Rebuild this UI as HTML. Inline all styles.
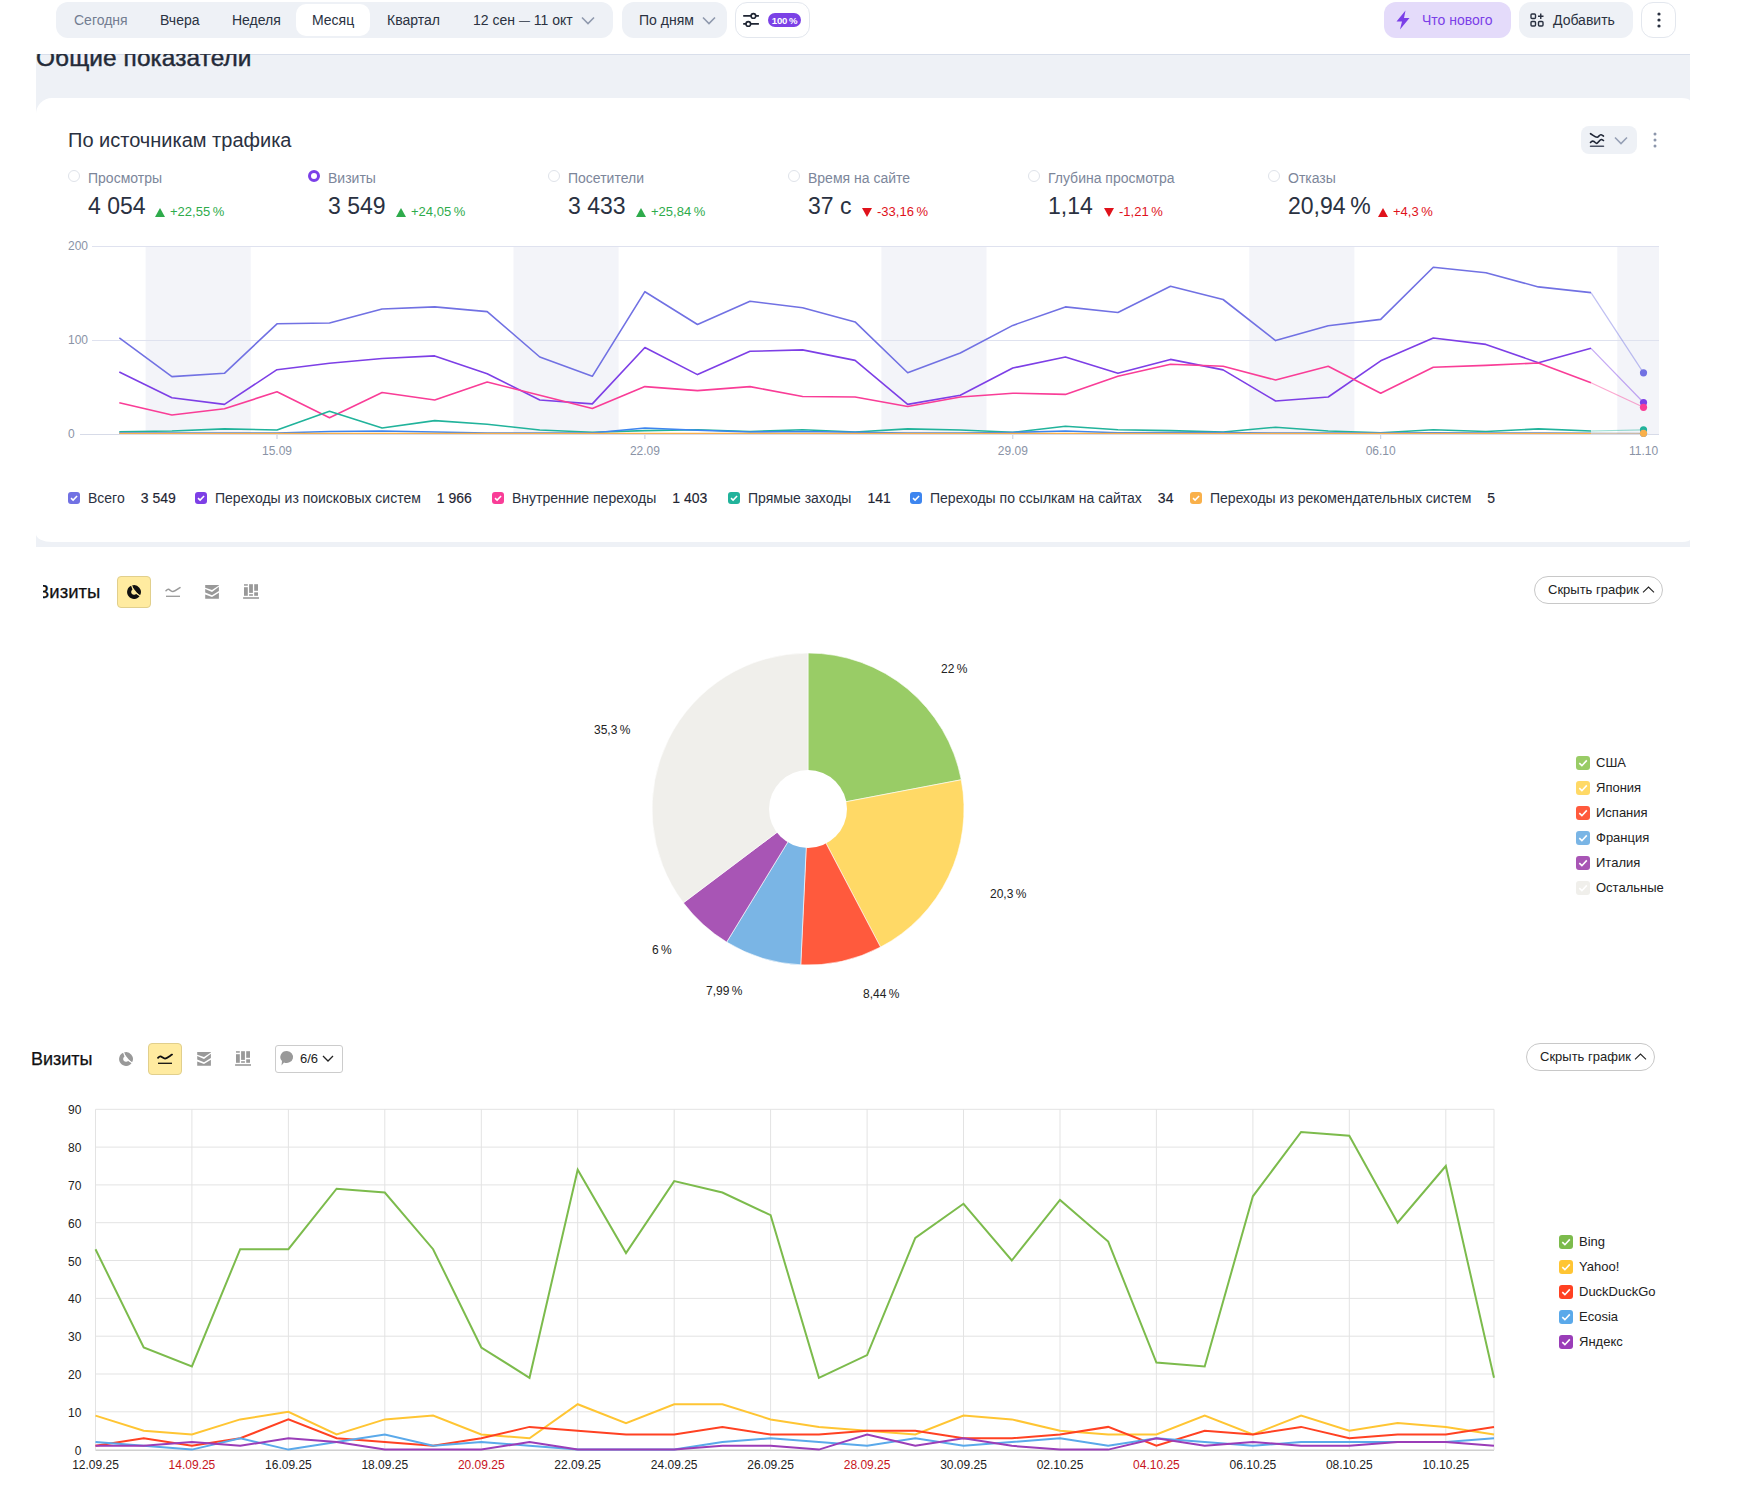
<!DOCTYPE html>
<html><head><meta charset="utf-8">
<style>
*{box-sizing:border-box;margin:0;padding:0}
html,body{width:1739px;height:1488px;overflow:hidden;background:#fff;font-family:"Liberation Sans", sans-serif;}
.abs{position:absolute}
svg{display:block}
.hdr-t{position:absolute;font-size:14px;line-height:16px;color:#2a3141;white-space:nowrap}
.ax1{position:absolute;font-size:12px;line-height:16px;color:#8a93a6;white-space:nowrap}
.ax3{position:absolute;font-size:12px;line-height:16px;color:#222;white-space:nowrap}
.pl{position:absolute;font-size:12px;line-height:16px;color:#222;white-space:nowrap}
.mlab{position:absolute;font-size:14px;line-height:16px;color:#7c869a;white-space:nowrap}
.mval{position:absolute;font-size:23px;line-height:26px;color:#2a3141;white-space:nowrap}
.mdel{position:absolute;font-size:13px;line-height:16px;white-space:nowrap}
.radio{position:absolute;width:12px;height:12px;border-radius:50%;border:1px solid #dfe3ea}
.leg1{position:absolute;font-size:14px;line-height:16px;color:#2a3141;white-space:nowrap}
.leg1 b{font-weight:normal}
.lg{position:absolute;font-size:13px;line-height:16px;color:#222;white-space:nowrap}
.btnh{position:absolute;border:1px solid #c8c8c8;border-radius:14px;background:#fff;font-size:13px;color:#222;line-height:26px;white-space:nowrap}
</style></head><body>

<div class="abs" style="left:36px;top:54px;width:1654px;height:495px;background:#eef1f6;border-top:1px solid #d9dfeb"></div>
<div class="abs" style="left:36px;top:44px;font-size:24.4px;line-height:28px;color:#232a38;white-space:nowrap;-webkit-text-stroke:0.45px #232a38;letter-spacing:0.1px">Общие показатели</div>
<div class="abs" style="left:36px;top:98px;width:1654px;height:444px;background:#fff;border-radius:16px 9px 8px 16px / 16px 2.8px 2.5px 8px"></div>
<div class="abs" style="left:0;top:0;width:1739px;height:54px;background:#fff"></div>
<div class="abs" style="left:56px;top:2px;width:557px;height:36px;background:#eef1f6;border-radius:12px"></div>
<div class="abs" style="left:296px;top:4px;width:74px;height:32px;background:#fff;border-radius:10px"></div>
<div class="hdr-t" style="left:74px;top:12px;color:#737d91">Сегодня</div>
<div class="hdr-t" style="left:160px;top:12px;color:#2a3141">Вчера</div>
<div class="hdr-t" style="left:232px;top:12px;color:#2a3141">Неделя</div>
<div class="hdr-t" style="left:312px;top:12px;color:#2a3141">Месяц</div>
<div class="hdr-t" style="left:387px;top:12px;color:#2a3141">Квартал</div>
<div class="hdr-t" style="left:473px;top:12px;color:#2a3141">12 сен <span style="font-size:11px;position:relative;top:-1px">—</span> 11 окт</div>
<div class="abs" style="left:581px;top:16px"><svg width="14" height="9" viewBox="0 0 14 9"><path d="M1 1.5 L7 7.5 L13 1.5" fill="none" stroke="#8f99ad" stroke-width="1.6"/></svg></div>
<div class="abs" style="left:622px;top:2px;width:105px;height:36px;background:#eef1f6;border-radius:12px"></div>
<div class="hdr-t" style="left:639px;top:12px">По дням</div>
<div class="abs" style="left:702px;top:16px"><svg width="14" height="9" viewBox="0 0 14 9"><path d="M1 1.5 L7 7.5 L13 1.5" fill="none" stroke="#8f99ad" stroke-width="1.6"/></svg></div>
<div class="abs" style="left:735px;top:2px;width:75px;height:36px;background:#fff;border:1px solid #e3e7ee;border-radius:12px"></div>
<svg class="abs" style="left:743px;top:12px" width="16" height="16" viewBox="0 0 16 16"><path d="M0.2 3.9 H15.9 M0.2 11.9 H15.9" stroke="#1f2533" stroke-width="1.8"/><circle cx="10.4" cy="3.9" r="2.3" fill="#fff" stroke="#1f2533" stroke-width="1.6"/><circle cx="5.3" cy="11.9" r="2.3" fill="#fff" stroke="#1f2533" stroke-width="1.6"/></svg>
<div class="abs" style="left:768px;top:13px;width:33px;height:14px;background:#7b41e6;border-radius:7px;color:#fff;font-size:9.6px;font-weight:bold;line-height:15px;text-align:center;letter-spacing:-0.2px">100&thinsp;%</div>
<div class="abs" style="left:1384px;top:2px;width:127px;height:36px;background:#e4dbfa;border-radius:12px"></div>
<svg class="abs" style="left:1395px;top:10px" width="16" height="20" viewBox="0 0 16 20"><path d="M10.5 0.5 L1.5 11.5 H7 L5 19.5 L14.5 8 H9 Z" fill="#7b3fe8"/></svg>
<div class="hdr-t" style="left:1422px;top:12px;color:#7b3fe8">Что нового</div>
<div class="abs" style="left:1519px;top:2px;width:114px;height:36px;background:#eef1f6;border-radius:12px"></div>
<svg class="abs" style="left:1530px;top:13px" width="14" height="14" viewBox="0 0 14 14"><rect x="1" y="1" width="4.5" height="4.5" rx="1" fill="none" stroke="#2a3141" stroke-width="1.4"/><rect x="1" y="8.5" width="4.5" height="4.5" rx="1" fill="none" stroke="#2a3141" stroke-width="1.4"/><rect x="8.5" y="8.5" width="4.5" height="4.5" rx="1" fill="none" stroke="#2a3141" stroke-width="1.4"/><path d="M10.75 0.5 V6 M8 3.25 H13.5" stroke="#2a3141" stroke-width="1.4"/></svg>
<div class="hdr-t" style="left:1553px;top:12px">Добавить</div>
<div class="abs" style="left:1641px;top:2px;width:35px;height:36px;background:#fff;border:1px solid #e3e7ee;border-radius:12px"></div>
<svg class="abs" style="left:1656px;top:12px" width="6" height="16" viewBox="0 0 6 16"><circle cx="3" cy="2" r="1.6" fill="#2a3141"/><circle cx="3" cy="8" r="1.6" fill="#2a3141"/><circle cx="3" cy="14" r="1.6" fill="#2a3141"/></svg>
<div class="abs" style="left:68px;top:128px;font-size:20px;line-height:24px;color:#2a3141;white-space:nowrap">По источникам трафика</div>
<div class="abs" style="left:1581px;top:126px;width:56px;height:28px;background:#eef1f6;border-radius:8px"></div>
<svg class="abs" style="left:1589px;top:132px" width="16" height="16" viewBox="0 0 16 16"><path d="M1.5 1.7 C4 3.2 6.5 5.5 8.2 5.3 C9.5 5.1 10.5 2.5 12 2.8 C13 3 13.8 3.6 14.5 4.1 M1.5 10.5 C2.5 9.2 3.8 8.8 5 9.5 C6.2 10.2 7 11.8 8 11.3 C9.5 10.5 11 7.2 12.5 7.5 C13.3 7.7 14 8.3 14.5 8.5" fill="none" stroke="#1f2636" stroke-width="1.6" stroke-linecap="round"/><path d="M1.5 14.3 H14.5" stroke="#4a5163" stroke-width="1.5" stroke-linecap="round"/></svg>
<svg class="abs" style="left:1614px;top:136px" width="14" height="9" viewBox="0 0 14 9"><path d="M1 1.5 L7 7.5 L13 1.5" fill="none" stroke="#96a0b5" stroke-width="1.6"/></svg>
<svg class="abs" style="left:1652px;top:131px" width="6" height="18" viewBox="0 0 6 18"><circle cx="3" cy="3" r="1.5" fill="#8c96ab"/><circle cx="3" cy="9" r="1.5" fill="#8c96ab"/><circle cx="3" cy="15" r="1.5" fill="#8c96ab"/></svg>
<div class="radio" style="left:68px;top:170px"></div>
<div class="mlab" style="left:88px;top:170px">Просмотры</div>
<div class="mval" style="left:88px;top:193px">4 054</div>
<div class="mdel" style="left:155px;top:203.5px;color:#2eab4b"><svg width="10" height="9" viewBox="0 0 10 9" style="position:absolute;left:0;top:4px"><path d="M0 9 L5 0 L10 9 Z" fill="#2eab4b"/></svg><span style="position:absolute;left:15px;top:0">+22,55&thinsp;%</span></div>
<div class="radio" style="left:308px;top:170px;border:3.5px solid #7b3fe8"></div>
<div class="mlab" style="left:328px;top:170px">Визиты</div>
<div class="mval" style="left:328px;top:193px">3 549</div>
<div class="mdel" style="left:396px;top:203.5px;color:#2eab4b"><svg width="10" height="9" viewBox="0 0 10 9" style="position:absolute;left:0;top:4px"><path d="M0 9 L5 0 L10 9 Z" fill="#2eab4b"/></svg><span style="position:absolute;left:15px;top:0">+24,05&thinsp;%</span></div>
<div class="radio" style="left:548px;top:170px"></div>
<div class="mlab" style="left:568px;top:170px">Посетители</div>
<div class="mval" style="left:568px;top:193px">3 433</div>
<div class="mdel" style="left:636px;top:203.5px;color:#2eab4b"><svg width="10" height="9" viewBox="0 0 10 9" style="position:absolute;left:0;top:4px"><path d="M0 9 L5 0 L10 9 Z" fill="#2eab4b"/></svg><span style="position:absolute;left:15px;top:0">+25,84&thinsp;%</span></div>
<div class="radio" style="left:788px;top:170px"></div>
<div class="mlab" style="left:808px;top:170px">Время на сайте</div>
<div class="mval" style="left:808px;top:193px">37 с</div>
<div class="mdel" style="left:862px;top:203.5px;color:#e0121b"><svg width="10" height="9" viewBox="0 0 10 9" style="position:absolute;left:0;top:4px"><path d="M0 0 L10 0 L5 9 Z" fill="#e0121b"/></svg><span style="position:absolute;left:15px;top:0">-33,16&thinsp;%</span></div>
<div class="radio" style="left:1028px;top:170px"></div>
<div class="mlab" style="left:1048px;top:170px">Глубина просмотра</div>
<div class="mval" style="left:1048px;top:193px">1,14</div>
<div class="mdel" style="left:1104px;top:203.5px;color:#e0121b"><svg width="10" height="9" viewBox="0 0 10 9" style="position:absolute;left:0;top:4px"><path d="M0 0 L10 0 L5 9 Z" fill="#e0121b"/></svg><span style="position:absolute;left:15px;top:0">-1,21&thinsp;%</span></div>
<div class="radio" style="left:1268px;top:170px"></div>
<div class="mlab" style="left:1288px;top:170px">Отказы</div>
<div class="mval" style="left:1288px;top:193px">20,94&thinsp;%</div>
<div class="mdel" style="left:1378px;top:203.5px;color:#e0121b"><svg width="10" height="9" viewBox="0 0 10 9" style="position:absolute;left:0;top:4px"><path d="M0 9 L5 0 L10 9 Z" fill="#e0121b"/></svg><span style="position:absolute;left:15px;top:0">+4,3&thinsp;%</span></div>
<svg width="1739" height="480" style="position:absolute;left:0;top:0">
<rect x="145.6" y="246" width="105.1" height="188" fill="#f3f4f9"/>
<rect x="513.5" y="246" width="105.1" height="188" fill="#f3f4f9"/>
<rect x="881.4" y="246" width="105.1" height="188" fill="#f3f4f9"/>
<rect x="1249.3" y="246" width="105.1" height="188" fill="#f3f4f9"/>
<rect x="1617.3" y="246" width="41.7" height="188" fill="#f3f4f9"/>
<line x1="92" y1="246.5" x2="1659" y2="246.5" stroke="#dfe2ef" stroke-width="1"/>
<line x1="92" y1="340.5" x2="1659" y2="340.5" stroke="#dfe2ef" stroke-width="1"/>
<line x1="80" y1="434.5" x2="1659" y2="434.5" stroke="#d7dbe8" stroke-width="1"/>
<line x1="277.0" y1="435" x2="277.0" y2="439" stroke="#c5cbdb" stroke-width="1"/>
<line x1="644.9" y1="435" x2="644.9" y2="439" stroke="#c5cbdb" stroke-width="1"/>
<line x1="1012.8" y1="435" x2="1012.8" y2="439" stroke="#c5cbdb" stroke-width="1"/>
<line x1="1380.7" y1="435" x2="1380.7" y2="439" stroke="#c5cbdb" stroke-width="1"/>
<polyline points="119.3,337.8 171.9,376.6 224.4,373.3 277.0,323.8 329.5,323.0 382.1,309.0 434.7,306.9 487.2,311.6 539.8,357.0 592.3,376.3 644.9,291.7 697.5,324.5 750.0,301.2 802.6,307.8 855.1,321.9 907.7,372.8 960.3,353.0 1012.8,325.4 1065.4,306.9 1117.9,312.5 1170.5,286.2 1223.1,299.5 1275.6,340.6 1328.2,325.7 1380.7,319.4 1433.3,267.3 1485.9,272.8 1538.4,286.9 1591.0,292.6" fill="none" stroke="#7171e3" stroke-width="1.6" stroke-linejoin="round"/><polyline points="1591.0,292.6 1643.5,372.8" fill="none" stroke="#7171e3" stroke-opacity="0.45" stroke-width="1.2"/><circle cx="1643.5" cy="372.8" r="3.6" fill="#7171e3"/>
<polyline points="119.3,372.0 171.9,397.8 224.4,404.4 277.0,369.7 329.5,363.3 382.1,358.5 434.7,355.9 487.2,373.7 539.8,400.0 592.3,403.9 644.9,347.5 697.5,374.6 750.0,351.3 802.6,349.9 855.1,360.4 907.7,404.4 960.3,395.3 1012.8,368.0 1065.4,357.0 1117.9,373.3 1170.5,359.4 1223.1,369.9 1275.6,401.0 1328.2,397.0 1380.7,360.8 1433.3,338.0 1485.9,344.4 1538.4,362.8 1591.0,348.3" fill="none" stroke="#7d3fe6" stroke-width="1.6" stroke-linejoin="round"/><polyline points="1591.0,348.3 1643.5,402.5" fill="none" stroke="#7d3fe6" stroke-opacity="0.45" stroke-width="1.2"/><circle cx="1643.5" cy="402.5" r="3.6" fill="#7d3fe6"/>
<polyline points="119.3,402.7 171.9,415.0 224.4,408.7 277.0,391.8 329.5,417.7 382.1,392.5 434.7,400.0 487.2,382.0 539.8,395.3 592.3,408.5 644.9,386.6 697.5,390.6 750.0,386.6 802.6,396.5 855.1,397.0 907.7,406.5 960.3,397.0 1012.8,393.2 1065.4,394.4 1117.9,376.3 1170.5,364.3 1223.1,366.3 1275.6,380.0 1328.2,366.3 1380.7,393.2 1433.3,367.3 1485.9,365.4 1538.4,363.0 1591.0,382.8" fill="none" stroke="#f93d97" stroke-width="1.6" stroke-linejoin="round"/><polyline points="1591.0,382.8 1643.5,407.3" fill="none" stroke="#f93d97" stroke-opacity="0.45" stroke-width="1.2"/><circle cx="1643.5" cy="407.3" r="3.6" fill="#f93d97"/>
<polyline points="119.3,431.8 171.9,431.0 224.4,428.9 277.0,430.0 329.5,411.3 382.1,428.0 434.7,420.6 487.2,424.2 539.8,430.0 592.3,432.3 644.9,430.6 697.5,429.8 750.0,431.5 802.6,429.8 855.1,432.0 907.7,428.9 960.3,430.0 1012.8,432.3 1065.4,426.3 1117.9,429.8 1170.5,430.6 1223.1,432.0 1275.6,427.2 1328.2,431.0 1380.7,432.7 1433.3,429.8 1485.9,431.5 1538.4,428.9 1591.0,431.0" fill="none" stroke="#21b39b" stroke-width="1.6" stroke-linejoin="round"/><polyline points="1591.0,431.0 1643.5,429.8" fill="none" stroke="#21b39b" stroke-opacity="0.45" stroke-width="1.2"/><circle cx="1643.5" cy="429.8" r="3.6" fill="#21b39b"/>
<polyline points="119.3,433.0 171.9,433.0 224.4,433.0 277.0,433.0 329.5,431.5 382.1,431.0 434.7,432.0 487.2,433.0 539.8,433.0 592.3,433.0 644.9,428.0 697.5,430.3 750.0,432.0 802.6,431.5 855.1,432.3 907.7,433.0 960.3,433.0 1012.8,432.5 1065.4,431.0 1117.9,432.7 1170.5,432.5 1223.1,432.5 1275.6,433.0 1328.2,433.0 1380.7,433.0 1433.3,432.8 1485.9,433.0 1538.4,433.0 1591.0,433.2" fill="none" stroke="#3d85ef" stroke-width="1.6" stroke-linejoin="round"/><polyline points="1591.0,433.2 1643.5,433.3" fill="none" stroke="#3d85ef" stroke-opacity="0.45" stroke-width="1.2"/><circle cx="1643.5" cy="433.3" r="3.6" fill="#3d85ef"/>
<polyline points="119.3,433.3 171.9,433.3 224.4,433.3 277.0,433.3 329.5,433.3 382.1,433.3 434.7,433.3 487.2,433.3 539.8,433.3 592.3,433.3 644.9,433.3 697.5,433.3 750.0,433.3 802.6,433.3 855.1,433.3 907.7,433.3 960.3,433.3 1012.8,433.3 1065.4,433.3 1117.9,433.3 1170.5,433.3 1223.1,433.3 1275.6,433.3 1328.2,433.3 1380.7,433.3 1433.3,433.3 1485.9,433.3 1538.4,433.3 1591.0,433.3" fill="none" stroke="#f9b04a" stroke-width="1.3" stroke-linejoin="round"/><polyline points="1591.0,433.3 1643.5,433.3" fill="none" stroke="#f9b04a" stroke-opacity="0.45" stroke-width="1.2"/><circle cx="1643.5" cy="433.3" r="3.6" fill="#f9b04a"/>
</svg>
<div class="ax1" style="top:238px;left:68px">200</div>
<div class="ax1" style="top:332px;left:68px">100</div>
<div class="ax1" style="top:426px;left:68px">0</div>
<div class="ax1" style="top:443px;left:237.0px;width:80px;text-align:center">15.09</div>
<div class="ax1" style="top:443px;left:604.9px;width:80px;text-align:center">22.09</div>
<div class="ax1" style="top:443px;left:972.8px;width:80px;text-align:center">29.09</div>
<div class="ax1" style="top:443px;left:1340.7px;width:80px;text-align:center">06.10</div>
<div class="ax1" style="top:443px;left:1603.5px;width:80px;text-align:center">11.10</div>
<div class="abs" style="left:68px;top:492px"><svg width="12" height="12" viewBox="0 0 12 12"><rect x="0" y="0" width="12" height="12" rx="3" fill="#7171e3"/><path d="M3 6.1 L5.1 8.1 L9.1 3.9" fill="none" stroke="#fff" stroke-width="1.5"/></svg></div>
<div class="leg1" style="left:88px;top:490px">Всего<span style="margin-left:16px;color:#1f2533;-webkit-text-stroke:0.15px #1f2533">3 549</span></div>
<div class="abs" style="left:195px;top:492px"><svg width="12" height="12" viewBox="0 0 12 12"><rect x="0" y="0" width="12" height="12" rx="3" fill="#7d3fe6"/><path d="M3 6.1 L5.1 8.1 L9.1 3.9" fill="none" stroke="#fff" stroke-width="1.5"/></svg></div>
<div class="leg1" style="left:215px;top:490px">Переходы из поисковых систем<span style="margin-left:16px;color:#1f2533;-webkit-text-stroke:0.15px #1f2533">1 966</span></div>
<div class="abs" style="left:492px;top:492px"><svg width="12" height="12" viewBox="0 0 12 12"><rect x="0" y="0" width="12" height="12" rx="3" fill="#f93d97"/><path d="M3 6.1 L5.1 8.1 L9.1 3.9" fill="none" stroke="#fff" stroke-width="1.5"/></svg></div>
<div class="leg1" style="left:512px;top:490px">Внутренние переходы<span style="margin-left:16px;color:#1f2533;-webkit-text-stroke:0.15px #1f2533">1 403</span></div>
<div class="abs" style="left:728px;top:492px"><svg width="12" height="12" viewBox="0 0 12 12"><rect x="0" y="0" width="12" height="12" rx="3" fill="#21b39b"/><path d="M3 6.1 L5.1 8.1 L9.1 3.9" fill="none" stroke="#fff" stroke-width="1.5"/></svg></div>
<div class="leg1" style="left:748px;top:490px">Прямые заходы<span style="margin-left:16px;color:#1f2533;-webkit-text-stroke:0.15px #1f2533">141</span></div>
<div class="abs" style="left:910px;top:492px"><svg width="12" height="12" viewBox="0 0 12 12"><rect x="0" y="0" width="12" height="12" rx="3" fill="#3d85ef"/><path d="M3 6.1 L5.1 8.1 L9.1 3.9" fill="none" stroke="#fff" stroke-width="1.5"/></svg></div>
<div class="leg1" style="left:930px;top:490px">Переходы по ссылкам на сайтах<span style="margin-left:16px;color:#1f2533;-webkit-text-stroke:0.15px #1f2533">34</span></div>
<div class="abs" style="left:1190px;top:492px"><svg width="12" height="12" viewBox="0 0 12 12"><rect x="0" y="0" width="12" height="12" rx="3" fill="#f9b04a"/><path d="M3 6.1 L5.1 8.1 L9.1 3.9" fill="none" stroke="#fff" stroke-width="1.5"/></svg></div>
<div class="leg1" style="left:1210px;top:490px">Переходы из рекомендательных систем<span style="margin-left:16px;color:#1f2533;-webkit-text-stroke:0.15px #1f2533">5</span></div>
<div class="abs" style="left:0;top:547px;width:1739px;height:941px;background:#fff"></div>
<div class="abs" style="left:42.5px;top:581px;font-size:18.5px;line-height:22px;color:#111;white-space:nowrap;width:70px;overflow:hidden;-webkit-text-stroke:0.25px #111"><span style="position:relative;left:-5.5px">Визиты</span></div>
<div class="abs" style="left:117px;top:576px;width:34px;height:32px;background:#ffeba0;border:1px solid #e1cf8c;border-radius:4px"></div>
<div class="abs" style="left:126px;top:584px"><svg width="16" height="16" viewBox="0 0 16 16"><path d="M13.85 11.66 A6.9 6.9 0 1 1 5.64 1.52 L7.04 5.37 A2.8 2.8 0 1 0 10.37 9.48 Z" fill="#111"/><path d="M5.64 1.52 A6.9 6.9 0 0 1 13.85 11.66 L10.96 8.80 L7.73 4.64 Z" fill="#111"/><path d="M7.49 6.59 L5.43 0.95 M9.27 8.79 L14.36 11.97" stroke="#ffeba0" stroke-width="1.1"/></svg></div>
<div class="abs" style="left:165px;top:586px"><svg width="16" height="12" viewBox="0 0 16 12"><path d="M1 4.8 C1.8 3.9 2.6 3.2 3.5 3.3 C4.6 3.5 6.5 5.6 8 5.6 C10 5.4 12.5 3.2 15 1.6" fill="none" stroke="#999" stroke-width="1.5" stroke-linecap="round"/><path d="M1 10.3 H15" stroke="#999" stroke-width="1.3"/></svg></div>
<div class="abs" style="left:205px;top:585px"><svg width="14" height="14" viewBox="0 0 14 14"><path d="M0.2 0.1 H13.9 V0.6 L7 5.0 L0.2 2.7 Z M0.2 4.0 L7 6.9 L13.9 1.8 V5.9 L7 10.3 L0.2 7.6 Z M0.2 9.4 L7 12.1 L13.9 7.7 V13.8 H0.2 Z" fill="#999"/></svg></div>
<div class="abs" style="left:243px;top:584px"><svg width="16" height="15" viewBox="0 0 16 15"><rect x="1" y="0.2" width="3.8" height="1.5" fill="#999"/><rect x="1" y="3.2" width="3.8" height="8.6" fill="#999"/><rect x="6.1" y="0.2" width="3.8" height="8.7" fill="#999"/><rect x="6.1" y="10.2" width="3.8" height="1.6" fill="#999"/><rect x="11.2" y="0.2" width="3.8" height="6.6" fill="#999"/><rect x="11.2" y="8.3" width="3.8" height="3.5" fill="#999"/><rect x="0.1" y="13.2" width="15.9" height="1.6" fill="#999"/></svg></div>
<div class="btnh" style="left:1534px;top:576px;width:129px;height:28px;padding-left:13px">Скрыть график<svg width="13" height="8" viewBox="0 0 13 8" style="position:absolute;left:106.5px;top:9px"><path d="M1 6.3 L6.5 1 L12 6.3" fill="none" stroke="#222" stroke-width="1.1"/></svg></div>
<svg width="1739" height="1488" style="position:absolute;left:0;top:0">
<path d="M808,809 L808.00,653.00 A156,156 0 0 1 961.24,779.77 Z" fill="#99cc66" stroke="#fff" stroke-width="0.6"/>
<path d="M808,809 L961.24,779.77 A156,156 0 0 1 880.56,947.10 Z" fill="#ffd966" stroke="#fff" stroke-width="0.6"/>
<path d="M808,809 L880.56,947.10 A156,156 0 0 1 800.75,964.83 Z" fill="#ff5a3d" stroke="#fff" stroke-width="0.6"/>
<path d="M808,809 L800.75,964.83 A156,156 0 0 1 726.66,942.11 Z" fill="#7ab5e5" stroke="#fff" stroke-width="0.6"/>
<path d="M808,809 L726.66,942.11 A156,156 0 0 1 683.37,902.82 Z" fill="#a855b5" stroke="#fff" stroke-width="0.6"/>
<path d="M808,809 L683.37,902.82 A156,156 0 0 1 808.00,653.00 Z" fill="#f0efeb" stroke="#fff" stroke-width="0.6"/>
<circle cx="808" cy="809" r="39" fill="#fff"/>
</svg>
<div class="pl" style="left:941px;top:660.5px">22&thinsp;%</div>
<div class="pl" style="left:594px;top:721.5px">35,3&thinsp;%</div>
<div class="pl" style="left:990px;top:885.5px">20,3&thinsp;%</div>
<div class="pl" style="left:652px;top:941.5px">6&thinsp;%</div>
<div class="pl" style="left:706px;top:982.5px">7,99&thinsp;%</div>
<div class="pl" style="left:863px;top:985.5px">8,44&thinsp;%</div>
<div class="abs" style="left:1576px;top:756px"><svg width="14" height="14" viewBox="0 0 14 14" style=""><rect x="0" y="0" width="14" height="14" rx="3" fill="#99cc66"/><path d="M3.3 7.2 L5.9 9.7 L10.8 4.4" fill="none" stroke="#fff" stroke-width="1.6"/></svg></div>
<div class="lg" style="left:1596px;top:755px">США</div>
<div class="abs" style="left:1576px;top:781px"><svg width="14" height="14" viewBox="0 0 14 14" style=""><rect x="0" y="0" width="14" height="14" rx="3" fill="#ffd966"/><path d="M3.3 7.2 L5.9 9.7 L10.8 4.4" fill="none" stroke="#fff" stroke-width="1.6"/></svg></div>
<div class="lg" style="left:1596px;top:780px">Япония</div>
<div class="abs" style="left:1576px;top:806px"><svg width="14" height="14" viewBox="0 0 14 14" style=""><rect x="0" y="0" width="14" height="14" rx="3" fill="#ff5a3d"/><path d="M3.3 7.2 L5.9 9.7 L10.8 4.4" fill="none" stroke="#fff" stroke-width="1.6"/></svg></div>
<div class="lg" style="left:1596px;top:805px">Испания</div>
<div class="abs" style="left:1576px;top:831px"><svg width="14" height="14" viewBox="0 0 14 14" style=""><rect x="0" y="0" width="14" height="14" rx="3" fill="#7ab5e5"/><path d="M3.3 7.2 L5.9 9.7 L10.8 4.4" fill="none" stroke="#fff" stroke-width="1.6"/></svg></div>
<div class="lg" style="left:1596px;top:830px">Франция</div>
<div class="abs" style="left:1576px;top:856px"><svg width="14" height="14" viewBox="0 0 14 14" style=""><rect x="0" y="0" width="14" height="14" rx="3" fill="#a855b5"/><path d="M3.3 7.2 L5.9 9.7 L10.8 4.4" fill="none" stroke="#fff" stroke-width="1.6"/></svg></div>
<div class="lg" style="left:1596px;top:855px">Италия</div>
<div class="abs" style="left:1576px;top:881px"><svg width="14" height="14" viewBox="0 0 14 14" style=""><rect x="0" y="0" width="14" height="14" rx="3" fill="#f0efeb"/><path d="M3.3 7.2 L5.9 9.7 L10.8 4.4" fill="none" stroke="#fff" stroke-width="1.6"/></svg></div>
<div class="lg" style="left:1596px;top:880px">Остальные</div>
<div class="abs" style="left:31px;top:1047.5px;font-size:18px;line-height:22px;color:#111;white-space:nowrap;-webkit-text-stroke:0.25px #111">Визиты</div>
<div class="abs" style="left:118px;top:1051px"><svg width="16" height="16" viewBox="0 0 16 16"><path d="M13.85 11.66 A6.9 6.9 0 1 1 5.64 1.52 L7.04 5.37 A2.8 2.8 0 1 0 10.37 9.48 Z" fill="#999"/><path d="M5.64 1.52 A6.9 6.9 0 0 1 13.85 11.66 L10.96 8.80 L7.73 4.64 Z" fill="#999"/><path d="M7.49 6.59 L5.43 0.95 M9.27 8.79 L14.36 11.97" stroke="#fff" stroke-width="1.1"/></svg></div>
<div class="abs" style="left:148px;top:1043px;width:34px;height:32px;background:#ffeba0;border:1px solid #e1cf8c;border-radius:4px"></div>
<div class="abs" style="left:157px;top:1053px"><svg width="16" height="12" viewBox="0 0 16 12"><path d="M1 4.8 C1.8 3.9 2.6 3.2 3.5 3.3 C4.6 3.5 6.5 5.6 8 5.6 C10 5.4 12.5 3.2 15 1.6" fill="none" stroke="#111" stroke-width="1.8" stroke-linecap="round"/><path d="M1 10.3 H15" stroke="#111" stroke-width="1.3"/></svg></div>
<div class="abs" style="left:197px;top:1052px"><svg width="14" height="14" viewBox="0 0 14 14"><path d="M0.2 0.1 H13.9 V0.6 L7 5.0 L0.2 2.7 Z M0.2 4.0 L7 6.9 L13.9 1.8 V5.9 L7 10.3 L0.2 7.6 Z M0.2 9.4 L7 12.1 L13.9 7.7 V13.8 H0.2 Z" fill="#999"/></svg></div>
<div class="abs" style="left:235px;top:1051px"><svg width="16" height="15" viewBox="0 0 16 15"><rect x="1" y="0.2" width="3.8" height="1.5" fill="#999"/><rect x="1" y="3.2" width="3.8" height="8.6" fill="#999"/><rect x="6.1" y="0.2" width="3.8" height="8.7" fill="#999"/><rect x="6.1" y="10.2" width="3.8" height="1.6" fill="#999"/><rect x="11.2" y="0.2" width="3.8" height="6.6" fill="#999"/><rect x="11.2" y="8.3" width="3.8" height="3.5" fill="#999"/><rect x="0.1" y="13.2" width="15.9" height="1.6" fill="#999"/></svg></div>
<div class="abs" style="left:275px;top:1045px;width:68px;height:28px;border:1px solid #ccc;border-radius:3px;background:#fff"></div>
<svg class="abs" style="left:279px;top:1050px" width="16" height="17" viewBox="0 0 16 17"><path d="M8 1 A6.5 6 0 1 1 5 12.5 L2.5 15.5 L3 11 A6.5 6 0 0 1 8 1 Z" fill="#999"/></svg>
<div class="abs" style="left:300px;top:1051px;font-size:13px;line-height:16px;color:#222">6/6</div>
<svg class="abs" style="left:322px;top:1055px" width="12" height="8" viewBox="0 0 12 8"><path d="M1 1 L6 6 L11 1" fill="none" stroke="#222" stroke-width="1.3"/></svg>
<div class="btnh" style="left:1526px;top:1043px;width:129px;height:28px;padding-left:13px">Скрыть график<svg width="13" height="8" viewBox="0 0 13 8" style="position:absolute;left:106.5px;top:9px"><path d="M1 6.3 L6.5 1 L12 6.3" fill="none" stroke="#222" stroke-width="1.1"/></svg></div>
<svg width="1739" height="1488" style="position:absolute;left:0;top:0">
<line x1="95.5" y1="1449.6" x2="1494" y2="1449.6" stroke="#e3e3e3" stroke-width="1"/>
<line x1="95.5" y1="1411.8" x2="1494" y2="1411.8" stroke="#e3e3e3" stroke-width="1"/>
<line x1="95.5" y1="1374.0" x2="1494" y2="1374.0" stroke="#e3e3e3" stroke-width="1"/>
<line x1="95.5" y1="1336.2" x2="1494" y2="1336.2" stroke="#e3e3e3" stroke-width="1"/>
<line x1="95.5" y1="1298.4" x2="1494" y2="1298.4" stroke="#e3e3e3" stroke-width="1"/>
<line x1="95.5" y1="1260.5" x2="1494" y2="1260.5" stroke="#e3e3e3" stroke-width="1"/>
<line x1="95.5" y1="1222.7" x2="1494" y2="1222.7" stroke="#e3e3e3" stroke-width="1"/>
<line x1="95.5" y1="1184.9" x2="1494" y2="1184.9" stroke="#e3e3e3" stroke-width="1"/>
<line x1="95.5" y1="1147.1" x2="1494" y2="1147.1" stroke="#e3e3e3" stroke-width="1"/>
<line x1="95.5" y1="1109.3" x2="1494" y2="1109.3" stroke="#e3e3e3" stroke-width="1"/>
<line x1="95.5" y1="1109.3" x2="95.5" y2="1450" stroke="#e3e3e3" stroke-width="1"/>
<line x1="191.9" y1="1109.3" x2="191.9" y2="1450" stroke="#e3e3e3" stroke-width="1"/>
<line x1="288.4" y1="1109.3" x2="288.4" y2="1450" stroke="#e3e3e3" stroke-width="1"/>
<line x1="384.8" y1="1109.3" x2="384.8" y2="1450" stroke="#e3e3e3" stroke-width="1"/>
<line x1="481.3" y1="1109.3" x2="481.3" y2="1450" stroke="#e3e3e3" stroke-width="1"/>
<line x1="577.7" y1="1109.3" x2="577.7" y2="1450" stroke="#e3e3e3" stroke-width="1"/>
<line x1="674.2" y1="1109.3" x2="674.2" y2="1450" stroke="#e3e3e3" stroke-width="1"/>
<line x1="770.6" y1="1109.3" x2="770.6" y2="1450" stroke="#e3e3e3" stroke-width="1"/>
<line x1="867.1" y1="1109.3" x2="867.1" y2="1450" stroke="#e3e3e3" stroke-width="1"/>
<line x1="963.5" y1="1109.3" x2="963.5" y2="1450" stroke="#e3e3e3" stroke-width="1"/>
<line x1="1060.0" y1="1109.3" x2="1060.0" y2="1450" stroke="#e3e3e3" stroke-width="1"/>
<line x1="1156.4" y1="1109.3" x2="1156.4" y2="1450" stroke="#e3e3e3" stroke-width="1"/>
<line x1="1252.9" y1="1109.3" x2="1252.9" y2="1450" stroke="#e3e3e3" stroke-width="1"/>
<line x1="1349.3" y1="1109.3" x2="1349.3" y2="1450" stroke="#e3e3e3" stroke-width="1"/>
<line x1="1445.8" y1="1109.3" x2="1445.8" y2="1450" stroke="#e3e3e3" stroke-width="1"/>
<line x1="1494" y1="1109.3" x2="1494" y2="1450" stroke="#e3e3e3" stroke-width="1"/>
<line x1="95.5" y1="1450.5" x2="1494" y2="1450.5" stroke="#d0d0d0" stroke-width="1"/>
<polyline points="95.5,1249.2 143.7,1347.5 191.9,1366.4 240.2,1249.2 288.4,1249.2 336.6,1188.7 384.8,1192.5 433.1,1249.2 481.3,1347.5 529.5,1377.8 577.7,1169.8 626.0,1253.0 674.2,1181.1 722.4,1192.5 770.6,1215.2 818.9,1377.8 867.1,1355.1 915.3,1237.9 963.5,1203.8 1011.8,1260.5 1060.0,1200.0 1108.2,1241.6 1156.4,1362.6 1204.7,1366.4 1252.9,1196.3 1301.1,1132.0 1349.3,1135.8 1397.6,1222.7 1445.8,1166.0 1494.0,1377.8" fill="none" stroke="#7cbb4c" stroke-width="2" stroke-linejoin="miter"/>
<polyline points="95.5,1415.6 143.7,1430.7 191.9,1434.5 240.2,1419.4 288.4,1411.8 336.6,1434.5 384.8,1419.4 433.1,1415.6 481.3,1434.5 529.5,1438.3 577.7,1404.2 626.0,1423.1 674.2,1404.2 722.4,1404.2 770.6,1419.4 818.9,1426.9 867.1,1430.7 915.3,1434.5 963.5,1415.6 1011.8,1419.4 1060.0,1430.7 1108.2,1434.5 1156.4,1434.5 1204.7,1415.6 1252.9,1434.5 1301.1,1415.6 1349.3,1430.7 1397.6,1423.1 1445.8,1426.9 1494.0,1434.5" fill="none" stroke="#ffc533" stroke-width="2" stroke-linejoin="miter"/>
<polyline points="95.5,1445.8 143.7,1438.3 191.9,1445.8 240.2,1438.3 288.4,1419.4 336.6,1438.3 384.8,1442.0 433.1,1445.8 481.3,1438.3 529.5,1426.9 577.7,1430.7 626.0,1434.5 674.2,1434.5 722.4,1426.9 770.6,1434.5 818.9,1434.5 867.1,1430.7 915.3,1430.7 963.5,1438.3 1011.8,1438.3 1060.0,1434.5 1108.2,1426.9 1156.4,1445.8 1204.7,1430.7 1252.9,1434.5 1301.1,1426.9 1349.3,1438.3 1397.6,1434.5 1445.8,1434.5 1494.0,1426.9" fill="none" stroke="#ff4122" stroke-width="2" stroke-linejoin="miter"/>
<polyline points="95.5,1442.0 143.7,1445.8 191.9,1449.6 240.2,1438.3 288.4,1449.6 336.6,1442.0 384.8,1434.5 433.1,1445.8 481.3,1442.0 529.5,1445.8 577.7,1449.6 626.0,1449.6 674.2,1449.6 722.4,1442.0 770.6,1438.3 818.9,1442.0 867.1,1445.8 915.3,1438.3 963.5,1445.8 1011.8,1442.0 1060.0,1438.3 1108.2,1445.8 1156.4,1438.3 1204.7,1442.0 1252.9,1445.8 1301.1,1442.0 1349.3,1442.0 1397.6,1442.0 1445.8,1442.0 1494.0,1438.3" fill="none" stroke="#5aa9ea" stroke-width="2" stroke-linejoin="miter"/>
<polyline points="95.5,1445.8 143.7,1445.8 191.9,1442.0 240.2,1445.8 288.4,1438.3 336.6,1442.0 384.8,1449.6 433.1,1449.6 481.3,1449.6 529.5,1442.0 577.7,1449.6 626.0,1449.6 674.2,1449.6 722.4,1445.8 770.6,1445.8 818.9,1449.6 867.1,1434.5 915.3,1445.8 963.5,1438.3 1011.8,1445.8 1060.0,1449.6 1108.2,1449.6 1156.4,1438.3 1204.7,1445.8 1252.9,1442.0 1301.1,1445.8 1349.3,1445.8 1397.6,1442.0 1445.8,1442.0 1494.0,1445.8" fill="none" stroke="#9a3db8" stroke-width="2" stroke-linejoin="miter"/>
</svg>
<div class="ax3" style="top:1442.6px;right:1657.7px">0</div>
<div class="ax3" style="top:1404.8px;right:1657.7px">10</div>
<div class="ax3" style="top:1367.0px;right:1657.7px">20</div>
<div class="ax3" style="top:1329.2px;right:1657.7px">30</div>
<div class="ax3" style="top:1291.4px;right:1657.7px">40</div>
<div class="ax3" style="top:1253.5px;right:1657.7px">50</div>
<div class="ax3" style="top:1215.7px;right:1657.7px">60</div>
<div class="ax3" style="top:1177.9px;right:1657.7px">70</div>
<div class="ax3" style="top:1140.1px;right:1657.7px">80</div>
<div class="ax3" style="top:1102.3px;right:1657.7px">90</div>
<div class="ax3" style="top:1457px;left:55.5px;width:80px;text-align:center;color:#222">12.09.25</div>
<div class="ax3" style="top:1457px;left:151.9px;width:80px;text-align:center;color:#c7141c">14.09.25</div>
<div class="ax3" style="top:1457px;left:248.4px;width:80px;text-align:center;color:#222">16.09.25</div>
<div class="ax3" style="top:1457px;left:344.8px;width:80px;text-align:center;color:#222">18.09.25</div>
<div class="ax3" style="top:1457px;left:441.3px;width:80px;text-align:center;color:#c7141c">20.09.25</div>
<div class="ax3" style="top:1457px;left:537.7px;width:80px;text-align:center;color:#222">22.09.25</div>
<div class="ax3" style="top:1457px;left:634.2px;width:80px;text-align:center;color:#222">24.09.25</div>
<div class="ax3" style="top:1457px;left:730.6px;width:80px;text-align:center;color:#222">26.09.25</div>
<div class="ax3" style="top:1457px;left:827.1px;width:80px;text-align:center;color:#c7141c">28.09.25</div>
<div class="ax3" style="top:1457px;left:923.5px;width:80px;text-align:center;color:#222">30.09.25</div>
<div class="ax3" style="top:1457px;left:1020.0px;width:80px;text-align:center;color:#222">02.10.25</div>
<div class="ax3" style="top:1457px;left:1116.4px;width:80px;text-align:center;color:#c7141c">04.10.25</div>
<div class="ax3" style="top:1457px;left:1212.9px;width:80px;text-align:center;color:#222">06.10.25</div>
<div class="ax3" style="top:1457px;left:1309.3px;width:80px;text-align:center;color:#222">08.10.25</div>
<div class="ax3" style="top:1457px;left:1405.8px;width:80px;text-align:center;color:#222">10.10.25</div>
<div class="abs" style="left:1559px;top:1235px"><svg width="14" height="14" viewBox="0 0 14 14" style=""><rect x="0" y="0" width="14" height="14" rx="3" fill="#7cbb4c"/><path d="M3.3 7.2 L5.9 9.7 L10.8 4.4" fill="none" stroke="#fff" stroke-width="1.6"/></svg></div>
<div class="lg" style="left:1579px;top:1234px">Bing</div>
<div class="abs" style="left:1559px;top:1260px"><svg width="14" height="14" viewBox="0 0 14 14" style=""><rect x="0" y="0" width="14" height="14" rx="3" fill="#ffc533"/><path d="M3.3 7.2 L5.9 9.7 L10.8 4.4" fill="none" stroke="#fff" stroke-width="1.6"/></svg></div>
<div class="lg" style="left:1579px;top:1259px">Yahoo!</div>
<div class="abs" style="left:1559px;top:1285px"><svg width="14" height="14" viewBox="0 0 14 14" style=""><rect x="0" y="0" width="14" height="14" rx="3" fill="#ff4122"/><path d="M3.3 7.2 L5.9 9.7 L10.8 4.4" fill="none" stroke="#fff" stroke-width="1.6"/></svg></div>
<div class="lg" style="left:1579px;top:1284px">DuckDuckGo</div>
<div class="abs" style="left:1559px;top:1310px"><svg width="14" height="14" viewBox="0 0 14 14" style=""><rect x="0" y="0" width="14" height="14" rx="3" fill="#5aa9ea"/><path d="M3.3 7.2 L5.9 9.7 L10.8 4.4" fill="none" stroke="#fff" stroke-width="1.6"/></svg></div>
<div class="lg" style="left:1579px;top:1309px">Ecosia</div>
<div class="abs" style="left:1559px;top:1335px"><svg width="14" height="14" viewBox="0 0 14 14" style=""><rect x="0" y="0" width="14" height="14" rx="3" fill="#9a3db8"/><path d="M3.3 7.2 L5.9 9.7 L10.8 4.4" fill="none" stroke="#fff" stroke-width="1.6"/></svg></div>
<div class="lg" style="left:1579px;top:1334px">Яндекс</div>
</body></html>
